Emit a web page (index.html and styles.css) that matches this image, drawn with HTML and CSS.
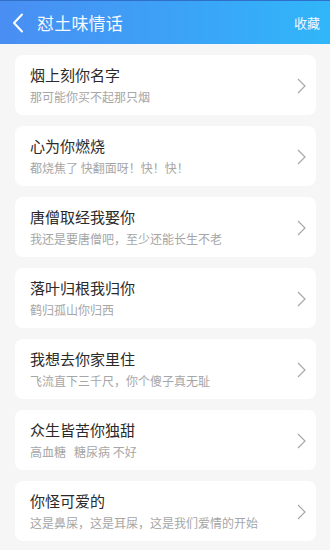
FILE: index.html
```html
<!DOCTYPE html>
<html lang="zh">
<head>
<meta charset="utf-8">
<title>怼土味情话</title>
<link rel="stylesheet" href="styles.css">
</head>
<body>
<header class="topbar">
  <div class="left">
    <svg class="back" width="12" height="20" viewBox="0 0 12 20"><path d="M10 1.5 L2 10 L10 18.5" fill="none" stroke="#fff" stroke-width="2" stroke-linecap="round" stroke-linejoin="round"/></svg>
    <span class="title">怼土味情话</span>
  </div>
  <span class="fav">收藏</span>
</header>
<main class="list">
  <div class="card"><div class="txt"><div class="t">烟上刻你名字</div><div class="s">那可能你买不起那只烟</div></div><svg class="chev" width="9" height="16" viewBox="0 0 9 16"><path d="M1 1 L8 8 L1 15" fill="none" stroke="#a8a8a8" stroke-width="1.2"/></svg></div>
  <div class="card"><div class="txt"><div class="t">心为你燃烧</div><div class="s">都烧焦了 快翻面呀！快！快！</div></div><svg class="chev" width="9" height="16" viewBox="0 0 9 16"><path d="M1 1 L8 8 L1 15" fill="none" stroke="#a8a8a8" stroke-width="1.2"/></svg></div>
  <div class="card"><div class="txt"><div class="t">唐僧取经我娶你</div><div class="s">我还是要唐僧吧，至少还能长生不老</div></div><svg class="chev" width="9" height="16" viewBox="0 0 9 16"><path d="M1 1 L8 8 L1 15" fill="none" stroke="#a8a8a8" stroke-width="1.2"/></svg></div>
  <div class="card"><div class="txt"><div class="t">落叶归根我归你</div><div class="s">鹤归孤山你归西</div></div><svg class="chev" width="9" height="16" viewBox="0 0 9 16"><path d="M1 1 L8 8 L1 15" fill="none" stroke="#a8a8a8" stroke-width="1.2"/></svg></div>
  <div class="card"><div class="txt"><div class="t">我想去你家里住</div><div class="s">飞流直下三千尺，你个傻子真无耻</div></div><svg class="chev" width="9" height="16" viewBox="0 0 9 16"><path d="M1 1 L8 8 L1 15" fill="none" stroke="#a8a8a8" stroke-width="1.2"/></svg></div>
  <div class="card"><div class="txt"><div class="t">众生皆苦你独甜</div><div class="s">高血糖&nbsp;&nbsp;&nbsp;糖尿病 不好</div></div><svg class="chev" width="9" height="16" viewBox="0 0 9 16"><path d="M1 1 L8 8 L1 15" fill="none" stroke="#a8a8a8" stroke-width="1.2"/></svg></div>
  <div class="card"><div class="txt"><div class="t">你怪可爱的</div><div class="s">这是鼻屎，这是耳屎，这是我们爱情的开始</div></div><svg class="chev" width="9" height="16" viewBox="0 0 9 16"><path d="M1 1 L8 8 L1 15" fill="none" stroke="#a8a8a8" stroke-width="1.2"/></svg></div>
</main>
</body>
</html>
```
FILE: styles.css
```css
* { box-sizing: border-box; }
html, body { margin: 0; padding: 0; }
body {
  background: #f6f6f6;
  font-family: "Noto Sans CJK SC", "Noto Sans", sans-serif;
  width: 330px;
  height: 550px;
  overflow: hidden;
}
.topbar {
  height: 44px;
  border-top: 1px solid #2f6fc8;
  background: linear-gradient(90deg, #4a8ef3 0%, #3aa5f7 60%, #31b6f9 100%);
  display: flex;
  align-items: center;
  justify-content: space-between;
  padding: 0 10px 0 12px;
  color: #f4f8ff;
}
.left { display: flex; align-items: center; }
.back { display: block; }
.title {
  font-size: 17px;
  margin-left: 13px;
  letter-spacing: 0.2px;
  line-height: 24px;
}
.fav { font-size: 13px; line-height: 20px; }
.list {
  padding: 11px 14px 0 15px;
  display: flex;
  flex-direction: column;
  gap: 11px;
}
.card {
  background: #fff;
  border-radius: 8px;
  height: 60px;
  padding: 10px 10px 10px 15px;
  display: flex;
  align-items: center;
  justify-content: space-between;
}
.t {
  font-size: 15px;
  line-height: 20px;
  color: #2a2a2a;
}
.s {
  font-size: 12px;
  line-height: 16px;
  color: #a6a6a6;
  margin-top: 4px;
}
.chev { display: block; margin-top: 2px; }
```
